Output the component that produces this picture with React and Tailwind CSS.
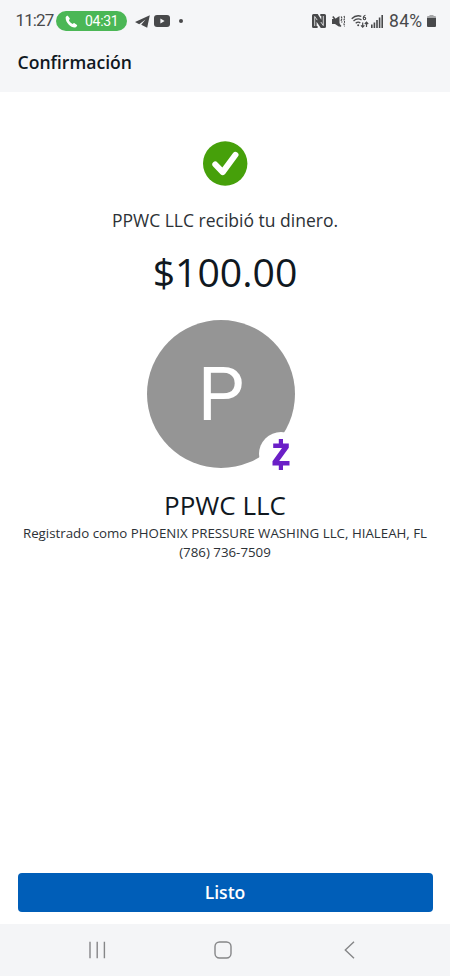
function NfcIcon() {
  return (
    <svg className="h-[14px] w-[14px]" viewBox="0 0 14 14">
      <path fill="#48494b" d="M1.500 0h4.200l3.600 5.800V2H8.300V0h4.200A1.500 1.500 0 0 1 14 1.500v11a1.500 1.500 0 0 1-1.500 1.500H8.800L4.600 7.800V12h1v2H1.500A1.500 1.500 0 0 1 0 12.500v-11A1.500 1.500 0 0 1 1.500 0z" />
      <path fill="none" stroke="#f5f6f8" strokeWidth=".8" d="M2.700 12V2.500l2.500 3.600M11.300 2v9.500L8.800 8" />
    </svg>
  );
}

function MuteIcon() {
  return (
    <svg className="h-[13px] w-[13px]" viewBox="0 0 13 13" fill="none">
      <path fill="#48494b" d="M0 4h3L7.500 1v11L3 9H0z" />
      <path stroke="#48494b" strokeWidth="1.600" d="M.8 1.500l8 10" />
      <path stroke="#48494b" strokeWidth="1.200" strokeDasharray="2 .7" d="M9.200 1.500l.8 2-.8 2 .8 2M12 1l.8 2-.8 2 .8 2-.8 2 .8 2.500" />
    </svg>
  );
}

function WifiIcon() {
  return (
    <svg className="h-[15px] w-[18px]" viewBox="0 0 18 15" fill="none" stroke="#48494b" strokeWidth="1.300">
      <path d="M.7 4.800C3.500 1.900 7 1.200 10.300 2.300M2.500 7c2.300-2.200 5.300-2.600 8-1.200M4.700 9.200c1.400-1.200 3.200-1.300 4.600-.3" />
      <circle cx="7.200" cy="11.300" r="1" fill="#48494b" stroke="none" />
      <path strokeWidth="1.100" d="M14.500 1.300c-1.500.3-2.200 1.400-2.200 2.900" />
      <circle cx="13.500" cy="4.500" r="1.200" strokeWidth="1.100" />
      <path strokeWidth="1.200" d="M11.700 8.500v4.500M10 11.300l1.700 1.800 1.700-1.800M15.500 13V8.300M13.800 10l1.700-1.800L17.200 10" />
    </svg>
  );
}

function SignalIcon() {
  return (
    <svg className="h-[13px] w-[12px]" viewBox="0 0 12 13" fill="#48494b">
      <rect x="0" y="9.500" width="1.600" height="3.500" />
      <rect x="2.600" y="7.500" width="1.600" height="5.500" />
      <rect x="5.200" y="5" width="1.600" height="8" />
      <rect x="7.800" y="2.500" width="1.600" height="10.500" />
      <rect x="10.400" y="0" width="1.600" height="13" />
    </svg>
  );
}

function StatusBar() {
  return (
    <div className="flex h-[42px] items-center pr-[14px] pl-[15.5px] font-['Roboto',sans-serif] text-[#48494b]">
      <span className="w-[40.5px] text-[17px] tracking-[-0.9px] whitespace-nowrap">11:27</span>
      <div className="flex h-5 w-[71px] items-center rounded-full bg-[#4bb756] pl-[9px] text-white">
        <svg className="h-[13px] w-[13px]" viewBox="0 0 13 13" fill="currentColor">
          <path d="M.7 2.200C1.200 1.100 2.300.5 3 .9l1.700 2.400c.3.500.1.900-.8 1.900.8 1.700 2.100 3 3.800 3.800.8-.8 1.300-1.100 1.800-.8l2.500 1.700c.6.500-.3 2.100-1.700 2.500C6.300 13.200.1 7.100.7 2.200z" />
        </svg>
        <span className="ml-[7px] text-[14px] tracking-[-0.3px]">04:31</span>
      </div>
      <svg className="ml-[8px] h-[13px] w-[15px]" viewBox="0 0 15 13" fill="#48494b">
        <path d="M14.800.2L0 7l4.200 2.200L10.500 4.500 6.200 9.800l6 3z" />
      </svg>
      <svg className="ml-1 h-3 w-4" viewBox="0 0 16 12">
        <rect width="16" height="12" rx="3" fill="#48494b" />
        <path fill="#f5f6f8" d="M6.400 3.500v5L10.600 6z" />
      </svg>
      <div className="ml-[9px] h-1 w-1 rounded-full bg-[#48494b]" />
      <div className="ml-auto flex items-center">
        <NfcIcon />
        <div className="ml-[6px] flex"><MuteIcon /></div>
        <div className="ml-[6px] flex"><WifiIcon /></div>
        <div className="ml-[2px] flex"><SignalIcon /></div>
        <span className="ml-[6px] w-[38px] text-[17.5px] tracking-[0.3px] whitespace-nowrap">84%</span>
        <svg className="h-3 w-[9px]" viewBox="0 0 9 12">
          <path fill="#a5a6a8" d="M2.500 0h4v1H8a1 1 0 0 1 1 1v2H0V2a1 1 0 0 1 1-1h1.500z" />
          <path fill="#48494b" d="M0 3h9v8a1 1 0 0 1-1 1H1a1 1 0 0 1-1-1z" />
        </svg>
      </div>
    </div>
  );
}

function Avatar() {
  return (
    <div className="relative mt-[22px] mr-[8px] flex h-[148px] w-[148px] items-center justify-center rounded-full bg-[#959595]">
      <span className="pt-[2px] font-['Roboto',sans-serif] text-[74px] leading-none text-white">P</span>
      {/* Zelle badge */}
      <div className="absolute right-[-8px] bottom-[-8px] flex h-[44px] w-[44px] items-center justify-center rounded-full bg-white">
        <svg className="h-[31px] w-[18px]" viewBox="0 0 18 31" fill="#6b1fc7">
          <path d="M6.800 0h4.200v4.500H16.800v4.300L7.200 22H17.500V26.500h-6.500V31H6.800v-4.500H.5v-4.300L10 9H1.200V4.500h5.600z" />
        </svg>
      </div>
    </div>
  );
}

function NavBar() {
  return (
    <div className="flex h-[52px] items-center bg-[#f4f5f7] pl-[88px]">
      <svg className="h-[18px] w-[18px]" viewBox="0 0 18 18" fill="none" stroke="#858688" strokeWidth="1.400">
        <path d="M2 .7v16.600M9.200 .7v16.600M16.400 .7v16.600" />
      </svg>
      <svg className="ml-[108px] h-[18px] w-[18px]" viewBox="0 0 18 18" fill="none" stroke="#858688" strokeWidth="1.400">
        <rect x="1" y="1" width="16" height="16" rx="4.500" />
      </svg>
      <svg className="ml-[112px] h-[18px] w-[11px]" viewBox="0 0 11 18" fill="none" stroke="#858688" strokeWidth="1.400">
        <path d="M10 .7L1.300 9 10 17.300" />
      </svg>
    </div>
  );
}

export default function App() {
  return (
    <div className="flex h-[976px] w-[450px] flex-col overflow-hidden bg-white font-['Open_Sans','Noto_Sans',sans-serif] text-[#10181f]">
      <header className="h-[92px] bg-[#f5f6f8]">
        <StatusBar />
        <h1 className="pl-[17.5px] text-[17.6px] leading-[40px] font-semibold">Confirmación</h1>
      </header>

      <main className="flex flex-1 flex-col items-center pt-[49px]">
        <svg className="h-[45px] w-[45px]" viewBox="0 0 45 45">
          <circle cx="22.200" cy="22.500" r="22.200" fill="#46a00a" />
          <path d="M12.300 23.500l7.400 7.600L32.500 13.800" fill="none" stroke="white" strokeWidth="6" strokeLinecap="round" strokeLinejoin="round" />
        </svg>
        <p className="mt-[22px] text-[17.5px] leading-6 text-[#2c3136]">PPWC LLC recibió tu dinero.</p>
        <p className="mt-[14px] text-[39.2px] leading-[52px]">$100.00</p>
        <Avatar />
        <h2 className="mt-[20px] text-[26px] leading-[34px]">PPWC LLC</h2>
        <p className="mt-[2px] text-center text-[13.3px] leading-[19px] whitespace-nowrap text-[#2c3136]">
          Registrado como PHOENIX PRESSURE WASHING LLC, HIALEAH, FL
          <br />
          (786) 736-7509
        </p>
      </main>

      <div className="px-[17.5px] pb-3">
        <button className="block h-[39px] w-full rounded-[4px] bg-[#005eb8] text-[17.6px] font-semibold text-white">Listo</button>
      </div>
      <NavBar />
    </div>
  );
}
